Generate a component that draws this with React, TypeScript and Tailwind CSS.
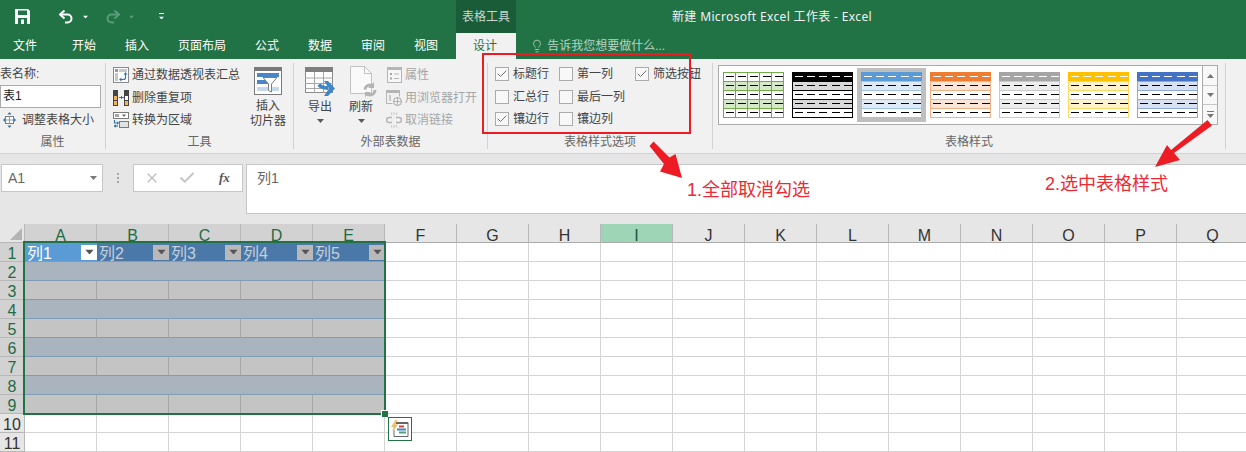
import type { ReactNode } from "react";
import { Check, Lightbulb, X } from "lucide-react";

const tabs = [
  { name: "文件", cls: "pl-[13px] pr-[20.5px]" },
  { name: "开始", cls: "px-[14.5px]" },
  { name: "插入", cls: "px-[14.5px]" },
  { name: "页面布局", cls: "px-[14.5px]" },
  { name: "公式", cls: "px-[14.5px]" },
  { name: "数据", cls: "px-[14.5px]" },
  { name: "审阅", cls: "px-[14.5px]" },
  { name: "视图", cls: "px-[14.5px]" },
];

const tableStyles = [
  { head: "", border: "#70ad47", band: "#d5e8c8", lines: true },
  { head: "#000000", border: "#000000", band: "#d9d9d9", lines: false },
  { head: "#5b9bd5", border: "#9dc3e6", band: "#deeaf6", lines: false, selected: true },
  { head: "#ed7d31", border: "#f4b183", band: "#fbe5d6", lines: false },
  { head: "#a5a5a5", border: "#c9c9c9", band: "#ededed", lines: false },
  { head: "#ffc000", border: "#ffd966", band: "#fff2cc", lines: false },
  { head: "#4472c4", border: "#8eaadb", band: "#d9e2f3", lines: false },
];

const columns = ["A", "B", "C", "D", "E", "F", "G", "H", "I", "J", "K", "L", "M", "N", "O", "P", "Q"];
const rows = [1, 2, 3, 4, 5, 6, 7, 8, 9, 10, 11];

function Caret({ color = "#595959", className = "" }: { color?: string; className?: string }) {
  return (
    <svg width="7" height="4" viewBox="0 0 7 4" className={className}>
      <path d="M0 0h7L3.5 4z" fill={color} />
    </svg>
  );
}

function Thumb({ head, border, band, lines }: { head: string; border: string; band: string; lines: boolean }) {
  return (
    <svg width="61" height="46" viewBox="0 0 61 46" shapeRendering="crispEdges">
      <rect width="61" height="46" fill="#fff" />
      {[0, 1, 2, 3, 4].map((r) => {
        const isHead = r === 0 && head;
        const fill = isHead ? head : r % 2 === 1 ? band : "#fff";
        return (
          <g key={r}>
            <rect x="0.5" y={r * 9 + 0.5} width="60" height="9" fill={fill} stroke={isHead ? head : border} strokeWidth="1" />
            {[0, 1, 2, 3, 4].map((c) => (
              <rect key={c} x={3 + c * 12.2} y={r * 9 + 4} width="8" height="1" fill={isHead ? "#fff" : "#000"} />
            ))}
          </g>
        );
      })}
      {lines && [12, 24, 36, 48].map((x) => <rect key={x} x={x} y="0" width="1" height="46" fill={border} />)}
      <rect x="0" y="45" width="61" height="1" fill={border} />
    </svg>
  );
}

function Group({ width, label, children }: { width: string; label: string; children: ReactNode }) {
  return (
    <div className={`${width} h-[86px] shrink-0 flex flex-col border-r border-[#d2d2d2]`}>
      <div className="flex-1 min-h-0">{children}</div>
      <div className="h-[14px] text-center text-[12px] leading-[15px] text-[#666]">{label}</div>
    </div>
  );
}

function SmallRow({ icon, text, disabled }: { icon: ReactNode; text: string; disabled?: boolean }) {
  return (
    <div className={`h-[22.5px] flex items-center whitespace-nowrap text-[12px] ${disabled ? "text-[#a6a6a6]" : "text-[#444]"}`}>
      <span className="w-[16px] h-[16px] shrink-0 flex items-center justify-center">{icon}</span>
      <span className="ml-[3px]">{text}</span>
    </div>
  );
}

function Option({ label, checked }: { label: string; checked?: boolean }) {
  return (
    <div className="flex items-center h-[22.5px] text-[12px] text-[#444] whitespace-nowrap">
      <span className="w-[14px] h-[14px] border border-[#ababab] bg-[#f8f8f8] flex items-center justify-center">
        {checked && <Check size={12} strokeWidth={2} color="#707070" />}
      </span>
      <span className="ml-[4px]">{label}</span>
    </div>
  );
}

function SaveIcon() {
  return (
    <svg width="15" height="15" viewBox="0 0 15 15">
      <path d="M0 0h13l2 2v13H0z" fill="#fff" />
      <rect x="3" y="1.5" width="9" height="4.5" fill="#217346" />
      <rect x="3" y="9" width="9" height="6" fill="#217346" />
      <rect x="6" y="10.5" width="3" height="4.5" fill="#fff" />
    </svg>
  );
}

function UndoIcon({ flip, color }: { flip?: boolean; color: string }) {
  return (
    <svg width="15" height="14" viewBox="0 0 15 14" className={flip ? "-scale-x-100" : ""}>
      <path d="M5.5 0.5 1 4.5l4.5 4" fill="none" stroke={color} strokeWidth="2" />
      <path d="M2 4.5h6.5a4 4 0 0 1 0 8H6" fill="none" stroke={color} strokeWidth="2" />
    </svg>
  );
}

function PivotIcon() {
  return (
    <svg width="16" height="16" viewBox="0 0 16 16">
      <rect x="0.5" y="0.5" width="15" height="15" fill="#fff" stroke="#8a8a8a" />
      <rect x="2" y="2" width="3" height="3" fill="#9a9a9a" />
      <rect x="2" y="6" width="3" height="8" fill="#c8c8c8" />
      <rect x="6" y="2" width="8" height="3" fill="#c8c8c8" />
      <path d="M7 12.5h3.5a2 2 0 0 0 2-2V7" fill="none" stroke="#2f75b5" strokeWidth="1.2" />
      <path d="M10.5 7.5 12.5 5l2 2.5zM8.5 10.5 6 12.5l2.500 2z" fill="#2f75b5" />
    </svg>
  );
}

function DedupeIcon() {
  return (
    <svg width="16" height="16" viewBox="0 0 16 16" shapeRendering="crispEdges">
      <rect x="0" y="0" width="5" height="16" fill="#444" />
      <rect x="1" y="5.5" width="3" height="4" fill="#f0b45e" />
      <rect x="1" y="11" width="3" height="4" fill="#f0b45e" />
      <rect x="11" y="0" width="5" height="16" fill="#444" />
      <rect x="12" y="5.5" width="3" height="4" fill="#fff" />
      <rect x="12" y="11" width="3" height="4" fill="#f0b45e" />
      <rect x="6" y="7" width="3" height="1" fill="#2f75b5" />
      <path d="M8 5.5 10.500 7.500 8 9.500z" fill="#2f75b5" />
    </svg>
  );
}

function ConvertIcon() {
  return (
    <svg width="16" height="16" viewBox="0 0 16 16">
      <rect x="0.5" y="0.5" width="15" height="6" fill="#fff" stroke="#7a7a7a" />
      <rect x="2" y="2" width="4" height="3" fill="#a6a6a6" />
      <path d="M9 2.500h4L11 5z" fill="#666" />
      <rect x="6.500" y="9.500" width="9" height="6" fill="#e3e3e3" stroke="#7a7a7a" />
      <path d="M1.500 8v3h3" fill="none" stroke="#2f75b5" strokeWidth="1.2" />
      <path d="M1 14h4" fill="none" stroke="#2f75b5" strokeWidth="1.2" />
      <path d="M4 9.300 6.200 11 4 12.700zM3 12.300 0.800 14 3 15.700z" fill="#2f75b5" />
    </svg>
  );
}

function SlicerIcon() {
  return (
    <svg width="28" height="28" viewBox="0 0 28 28" shapeRendering="crispEdges">
      <rect x="0.500" y="0.500" width="27" height="27" fill="#fff" stroke="#7a7a7a" />
      <rect x="0" y="0" width="28" height="4" fill="#7a7a7a" />
      <rect x="3" y="6" width="22" height="4" fill="#4a86c5" />
      <rect x="3" y="13" width="12" height="4" fill="#4a86c5" />
      <rect x="3" y="20" width="22" height="4" fill="#c5d9ee" />
      <path d="M9 10.500h14l-5.500 6.500v8l-3 -1.500v-6.500z" fill="#fff" stroke="#7f7f7f" shapeRendering="auto" />
    </svg>
  );
}

function ExportIcon() {
  return (
    <svg width="31" height="31" viewBox="0 0 31 31">
      <rect x="0.500" y="0.500" width="27" height="25" fill="#fff" stroke="#8a8a8a" />
      <rect x="0" y="0" width="28" height="5" fill="#7f7f7f" />
      <path d="M0 11h28M0 16.500h28M0 21.500h28M9.500 5v21M18.500 5v21" stroke="#a6a6a6" strokeWidth="1" />
      <path d="M14 17.500c2 3 5 3.500 9 3.500" fill="none" stroke="#3f86c6" strokeWidth="4" />
      <path d="M19 14h4l7 7.500-7 7.500h-4l5-7.500z" fill="#3f86c6" />
    </svg>
  );
}

function RefreshIcon() {
  return (
    <svg width="28" height="32" viewBox="0 0 28 32">
      <path d="M0.500 0.500h14l7 7v20h-21z" fill="#fafafa" stroke="#c2c2c2" />
      <path d="M14.500 0.500v7h7" fill="none" stroke="#c2c2c2" />
      <circle cx="20" cy="24" r="5" fill="none" stroke="#b3b3b3" strokeWidth="3" strokeDasharray="11 4.700" />
      <path d="M24 16v6h-6zM15 31v-5h6z" fill="#b3b3b3" />
    </svg>
  );
}

function PropsIcon() {
  return (
    <svg width="15" height="16" viewBox="0 0 15 16">
      <rect x="0.500" y="0.500" width="14" height="15" fill="#f7f7f7" stroke="#b5b5b5" />
      <rect x="0" y="0" width="15" height="3" fill="#b5b5b5" />
      <rect x="3" y="6" width="2" height="2" fill="#a6a6a6" />
      <rect x="3" y="10.500" width="2" height="2" fill="#a6a6a6" />
      <path d="M7 7h5M7 11.500h5" stroke="#b5b5b5" />
    </svg>
  );
}

function BrowserIcon() {
  return (
    <svg width="16" height="16" viewBox="0 0 16 16">
      <path d="M6.500 13.500h-6v-13h13v6" fill="none" stroke="#b5b5b5" />
      <rect x="0" y="0" width="14" height="3" fill="#b5b5b5" />
      <rect x="3" y="5" width="2" height="6" fill="#c8c8c8" />
      <circle cx="11.500" cy="11.500" r="4" fill="#f1f1f1" stroke="#a6a6a6" />
      <path d="M8 11.500h7M11.500 8v7" stroke="#a6a6a6" strokeWidth="0.800" />
    </svg>
  );
}

function UnlinkIcon() {
  return (
    <svg width="16" height="16" viewBox="0 0 16 16">
      <path d="M6 5.500H3a2.500 2.500 0 0 0 0 5h3M10 5.500h3a2.500 2.500 0 0 1 0 5h-3" fill="none" stroke="#b5b5b5" strokeWidth="1.600" />
      <path d="M5 0.500 6 3M11 0.500 10 3M8 0v2.500M5 15.500 6 13M11 15.500 10 13M8 16v-2.500" stroke="#c4c4c4" />
    </svg>
  );
}

function ResizeIcon() {
  return (
    <svg width="13" height="16" viewBox="0 0 13 16">
      <rect x="2.500" y="4.500" width="8" height="7" fill="#fff" stroke="#7a7a7a" />
      <path d="M2.500 8h8M6.500 4.500v7" stroke="#9a9a9a" />
      <path d="M6.500 0l2 2.500h-4zM6.500 16l2-2.500h-4zM0 8l2-2v4zM13 8l-2-2v4z" fill="#2f75b5" />
    </svg>
  );
}

function QuickIcon() {
  return (
    <svg width="18" height="18" viewBox="0 0 18 18">
      <path d="M5 2.500h12v14H3V10" fill="#fff" stroke="#666" />
      <rect x="5" y="2" width="12" height="2" fill="#666" />
      <path d="M4.500 0 0 7h2.500L1.500 12 7 4.500H4.500L6.500 0z" fill="#f0b96b" />
      <rect x="8" y="5.500" width="5" height="2" fill="#d9432f" />
      <rect x="6" y="8.500" width="9" height="2" fill="#3f86c6" />
      <rect x="8" y="11.500" width="7" height="2" fill="#4aa37b" />
    </svg>
  );
}

function Annotations() {
  return (
    <>
      <div className="absolute left-[482px] top-[53px] w-[209px] h-[81px] border-2 border-[#ed1c24]" />
      <svg className="absolute left-0 top-0 pointer-events-none" width="1246" height="230">
        <path d="M649.500 146 653.500 141.500 669.500 157.500 675.500 154 682 178 660 171.500 664 164z" fill="#ed1c24" />
        <path d="M1207.500 120 1212 125.500 1174 153 1180 160 1155 167 1167 145 1171 150z" fill="#ed1c24" />
      </svg>
      <div className="absolute left-[687px] top-[177px] text-[18px] leading-[26px] text-[#ed2a33] whitespace-nowrap">1.全部取消勾选</div>
      <div className="absolute left-[1045px] top-[171px] text-[18px] leading-[26px] text-[#ed2a33] whitespace-nowrap">2.选中表格样式</div>
    </>
  );
}

function Cell({ row, col }: { row: number; col: number }) {
  if (row === 1 && col < 5) {
    const active = col === 0;
    return (
      <div className={`flex items-center justify-between pl-[2px] border-b border-[#7f9db9] ${active ? "bg-[#5b9bd5] text-white" : "bg-[#4a78a8] text-[#c6d0db]"} text-[16px] leading-[18px]`}>
        <span className="pt-[3px]">列{col + 1}</span>
        <span className={`w-[16px] h-[15px] flex items-center justify-center ${active ? "bg-white" : "bg-[#b9b9b9]"}`}>
          <Caret color="#555" className="scale-125" />
        </span>
      </div>
    );
  }
  if (row >= 2 && row <= 9 && col < 5) {
    if (row % 2 === 0) return <div className="bg-[#a9b4bf] border-b border-[#7f9db9]" />;
    return <div className={`bg-[#c4c4c4] border-r border-b border-r-[#a6a6a6] ${row === 9 ? "border-b-white" : "border-b-[#7f9db9]"}`} />;
  }
  return <div className="bg-white border-r border-b border-[#d4d4d4]" />;
}

function Sheet() {
  return (
    <div className="relative h-[228px] overflow-hidden">
      <div className="grid grid-cols-[25px_repeat(17,72px)] auto-rows-[19px] w-[1249px] text-[16px] leading-[19px]">
        <div className="relative bg-[#e6e6e6] border-r border-b border-[#b8b8b8]">
          <svg width="12" height="12" viewBox="0 0 12 12" className="absolute left-[10px] top-[4px]">
            <path d="M12 0v12H0z" fill="#b4b4b4" />
          </svg>
        </div>
        {columns.map((c, i) => (
          <div
            key={c}
            className={`flex justify-center pt-[2px] border-r border-b border-r-[#b8b8b8] border-b-[#ababab] ${
              i < 5 ? "bg-[#d2d2d2] text-[#1f6b45]" : c === "I" ? "bg-[#9fd5b7] text-[#0f5a36]" : "bg-[#e6e6e6] text-[#333]"
            }`}
          >
            {c}
          </div>
        ))}
        {rows.map((r) => (
          <div key={r} className="contents">
            <div className={`flex justify-center pt-[1px] border-r border-b border-[#b8b8b8] ${r < 10 ? "bg-[#d2d2d2] text-[#1f6b45]" : "bg-[#e6e6e6] text-[#333]"}`}>
              {r}
            </div>
            {columns.map((c, i) => (
              <Cell key={c} row={r} col={i} />
            ))}
          </div>
        ))}
      </div>
      {/* selection frame */}
      <div className="absolute left-[23px] top-[17px] w-[363px] h-[174px] border-2 border-[#217346]" />
      <div className="absolute left-[381px] top-[186px] w-[7px] h-[7px] bg-[#217346] border-l border-t border-white" />
      <div className="absolute left-[388px] top-[193px] w-[24px] h-[24px] border border-[#217346] bg-white flex items-center justify-center">
        <QuickIcon />
      </div>
    </div>
  );
}

export default function App() {
  return (
    <div className="relative w-[1246px] h-[452px] overflow-hidden bg-white font-['Liberation_Sans','Noto_Sans_CJK_SC',sans-serif]">
      {/* title bar */}
      <div className="h-[33px] bg-[#217346] flex text-[12px]">
        <div className="w-[456px] shrink-0 flex items-center pl-[15px]">
          <SaveIcon />
          <span className="ml-[29px]"><UndoIcon color="#fff" /></span>
          <Caret color="#fff" className="ml-[8px] scale-75" />
          <span className="ml-[16px]"><UndoIcon flip color="#5c9a7b" /></span>
          <Caret color="#5c9a7b" className="ml-[8px] scale-75" />
          <span className="ml-[23px] flex flex-col items-center gap-[2px]">
            <span className="w-[5px] h-px bg-white" />
            <Caret color="#fff" className="scale-75" />
          </span>
        </div>
        <div className="w-[60px] shrink-0 bg-[#1a5c38] text-[#c7d6cd] flex items-center justify-center">表格工具</div>
        <div className="flex-1 flex items-center pl-[156px] text-[#f2f2f2] whitespace-nowrap tracking-[0.35px] font-['Noto_Sans','Noto_Sans_CJK_SC',sans-serif]">
          新建 Microsoft Excel 工作表 - Excel
        </div>
      </div>
      {/* tabs */}
      <div className="h-[26px] bg-[#217346] flex text-[12px] text-white whitespace-nowrap">
        {tabs.map((t) => (
          <div key={t.name} className={`${t.cls} flex items-center`}>{t.name}</div>
        ))}
        <div className="ml-[3.5px] w-[60px] bg-[#f1f1f1] text-[#217346] flex items-center justify-center pr-[2px]">设计</div>
        <div className="ml-[14px] flex items-center text-[#b5d3c2]">
          <Lightbulb size={14} strokeWidth={1.4} color="#b5d3c2" />
          <span className="ml-[3px]">告诉我您想要做什么...</span>
        </div>
      </div>
      {/* ribbon */}
      <div className="h-[95px] bg-[#f1f1f1] border-b border-[#d2d2d2] flex pt-[4px]">
        <Group width="w-[106px]" label="属性">
          <div className="h-[22px] text-[12px] leading-[22px] text-[#444]">表名称:</div>
          <div className="w-[101px] h-[23px] bg-white border border-[#ababab] pl-[2px] text-[12px] leading-[21px] text-[#222]">表1</div>
          <div className="h-[24px] flex items-center pl-[3px] text-[12px] text-[#444] whitespace-nowrap">
            <ResizeIcon />
            <span className="ml-[6px]">调整表格大小</span>
          </div>
        </Group>
        <Group width="w-[188px]" label="工具">
          <div className="flex pt-[1px]">
            <div className="w-[140px] pl-[7px]">
              <SmallRow icon={<PivotIcon />} text="通过数据透视表汇总" />
              <SmallRow icon={<DedupeIcon />} text="删除重复项" />
              <SmallRow icon={<ConvertIcon />} text="转换为区域" />
            </div>
            <div className="w-[44px] flex flex-col items-center pt-[3px] text-[12px] leading-[15px] text-[#444] whitespace-nowrap">
              <SlicerIcon />
              <div className="mt-[4px] text-center">插入<br />切片器</div>
            </div>
          </div>
        </Group>
        <Group width="w-[194px]" label="外部表数据">
          <div className="flex pl-[11px] pt-[1px]">
            <div className="w-[30px] flex flex-col items-center pt-[3px] text-[12px] leading-[15px] text-[#444]">
              <div className="h-[33px] self-start"><ExportIcon /></div>
              <div>导出</div>
              <Caret className="mt-[4px]" />
            </div>
            <div className="w-[30px] ml-[11px] flex flex-col items-center pt-[2px] text-[12px] leading-[15px] text-[#444]">
              <div className="h-[34px] self-start ml-[4px]"><RefreshIcon /></div>
              <div>刷新</div>
              <Caret className="mt-[4px]" />
            </div>
            <div className="ml-[10px]">
              <SmallRow disabled icon={<PropsIcon />} text="属性" />
              <SmallRow disabled icon={<BrowserIcon />} text="用浏览器打开" />
              <SmallRow disabled icon={<UnlinkIcon />} text="取消链接" />
            </div>
          </div>
        </Group>
        <Group width="w-[225px]" label="表格样式选项">
          <div className="grid grid-cols-[64px_76px_auto] pl-[7px]">
            <Option label="标题行" checked />
            <Option label="第一列" />
            <Option label="筛选按钮" checked />
            <Option label="汇总行" />
            <Option label="最后一列" />
            <span />
            <Option label="镶边行" checked />
            <Option label="镶边列" />
          </div>
        </Group>
        <Group width="w-[513px]" label="表格样式">
          <div className="ml-[5px] mt-[2px] w-[500px] h-[60px] bg-white border border-[#ababab] flex">
            <div className="flex py-[2px]">
              {tableStyles.map((s) => (
                <div key={s.head + s.border} className={`w-[69px] h-[54px] flex items-center justify-center ${s.selected ? "bg-[#bfbfbf]" : ""}`}>
                  <Thumb head={s.head} border={s.border} band={s.band} lines={s.lines} />
                </div>
              ))}
            </div>
            <div className="flex-1 flex flex-col border-l border-[#ababab] bg-[#f8f8f8]">
              <div className="h-[20px] border-b border-[#c6c6c6] flex items-center justify-center">
                <Caret color="#777" className="rotate-180" />
              </div>
              <div className="h-[19px] border-b border-[#c6c6c6] flex items-center justify-center">
                <Caret color="#777" />
              </div>
              <div className="flex-1 flex flex-col items-center justify-center gap-[2px]">
                <span className="w-[7px] h-px bg-[#777]" />
                <Caret color="#777" />
              </div>
            </div>
          </div>
        </Group>
      </div>
      {/* formula bar */}
      <div className="h-[70px] bg-[#e6e6e6] flex items-start pt-[10px] text-[14px] text-[#666]">
        <div className="ml-[1px] w-[102px] h-[28px] bg-white border border-[#c6c6c6] flex items-center justify-between pl-[6px] pr-[5px]">
          <span>A1</span>
          <Caret color="#777" />
        </div>
        <div className="w-[30px] h-[28px] flex flex-col items-center justify-center gap-[2px]">
          <span className="w-[2px] h-[2px] bg-[#a6a6a6]" />
          <span className="w-[2px] h-[2px] bg-[#a6a6a6]" />
          <span className="w-[2px] h-[2px] bg-[#a6a6a6]" />
        </div>
        <div className="w-[110px] h-[28px] bg-white border border-[#c6c6c6] flex items-center pl-[10px]">
          <X size={16} strokeWidth={1.8} color="#bdbdbd" />
          <Check size={18} strokeWidth={2.4} color="#c4c4c4" className="ml-[18px]" />
          <span className="ml-[23px] text-[13px] italic font-bold text-[#555] font-['Liberation_Serif',serif]">fx</span>
        </div>
        <div className="ml-[3px] flex-1 h-[50px] bg-white border border-r-0 border-[#c6c6c6] pl-[10px] pt-[4px] leading-[18px]">列1</div>
      </div>
      <Sheet />
      <Annotations />
    </div>
  );
}
